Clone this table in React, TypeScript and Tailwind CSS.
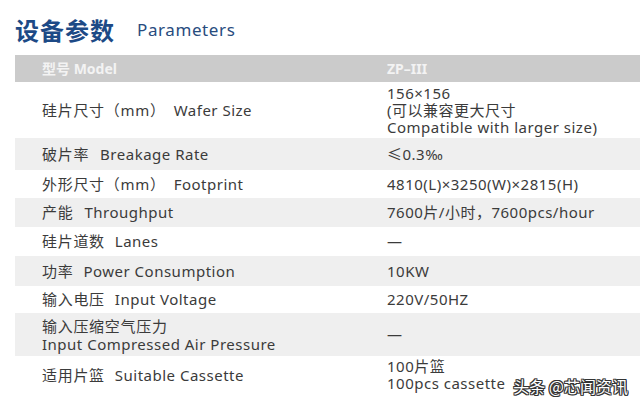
import React from "react";

type Row = { label: React.ReactNode; value: React.ReactNode; h: string; gray: boolean };

const L = ({ cn, en, gap = "ml-[10px]" }: { cn: string; en: string; gap?: string }) => (
  <span>
    <span className="tracking-[0.7px]">{cn}</span>
    <span className={gap}>{en}</span>
  </span>
);

const rows: Row[] = [
  {
    label: <L cn="硅片尺寸（mm）" en="Wafer Size" gap="ml-[8px]" />,
    value: (
      <div className="leading-[17px]">
        <div>156×156</div>
        <div>(可以兼容更大尺寸</div>
        <div>Compatible with larger size)</div>
      </div>
    ),
    h: "h-[56px]",
    gray: false,
  },
  { label: <L cn="破片率" en="Breakage Rate" gap="ml-[11px]" />, value: "≤0.3‰", h: "h-[32px]", gray: true },
  { label: <L cn="外形尺寸（mm）" en="Footprint" gap="ml-[8px]" />, value: "4810(L)×3250(W)×2815(H)", h: "h-[28px]", gray: false },
  { label: <L cn="产能" en="Throughput" gap="ml-[11px]" />, value: "7600片/小时，7600pcs/hour", h: "h-[29px]", gray: true },
  { label: <L cn="硅片道数" en="Lanes" />, value: "—", h: "h-[29px]", gray: false },
  { label: <L cn="功率" en="Power Consumption" gap="ml-[10px]" />, value: "10KW", h: "h-[30px]", gray: true },
  { label: <L cn="输入电压" en="Input Voltage" />, value: "220V/50HZ", h: "h-[27px]", gray: false },
  {
    label: (
      <div className="leading-[18px]">
        <div className="tracking-[0.7px]">输入压缩空气压力</div>
        <div>Input Compressed Air Pressure</div>
      </div>
    ),
    value: "—",
    h: "h-[43px]",
    gray: true,
  },
  {
    label: <L cn="适用片篮" en="Suitable Cassette" />,
    value: (
      <div className="leading-[17px]">
        <div>100片篮</div>
        <div>100pcs cassette</div>
      </div>
    ),
    h: "h-[38px]",
    gray: false,
  },
];

export default function App() {
  return (
    <div
      className="relative w-[640px] h-[412px] overflow-hidden bg-white"
      style={{ fontFamily: '"Noto Sans", "Noto Sans CJK SC", sans-serif' }}
    >
      <div className="h-[55px] pl-[15px] flex items-center pt-[4px]">
        <span
          className="text-[24px] font-bold text-[#1d4a86] tracking-[1px]"
          style={{ fontFamily: '"Noto Sans CJK SC", sans-serif' }}
        >
          设备参数
        </span>
        <span className="ml-[22px] text-[17px] text-[#284c7e] tracking-[0.6px]">Parameters</span>
      </div>
      <div className="ml-[15px]">
        <div className="h-[27px] bg-[#cbcbcb] flex items-center text-[14px] font-bold text-[#f3f3f3]">
          <div className="w-[372px] pl-[27px]">型号 Model</div>
          <div>ZP–III</div>
        </div>
        {rows.map((r, i) => (
          <div
            key={i}
            className={`${r.h} ${r.gray ? "bg-[#efefef]" : "bg-white"} flex items-center text-[15px] text-[#3b3b3b] tracking-[0.5px]`}
          >
            <div className="w-[372px] pl-[27px] whitespace-nowrap">{r.label}</div>
            <div className="whitespace-nowrap">{r.value}</div>
          </div>
        ))}
      </div>
      <div
        className="absolute right-[12px] bottom-[14px] text-[16px] text-white"
        style={{
          fontFamily: '"Noto Sans CJK SC", sans-serif',
          textShadow:
            "1px 0 0 #333, -1px 0 0 #333, 0 1px 0 #333, 0 -1px 0 #333, 1px 1px 0 #333, -1px -1px 0 #333, 1px -1px 0 #333, -1px 1px 0 #333",
        }}
      >
        头条 @芯闻资讯
      </div>
    </div>
  );
}
